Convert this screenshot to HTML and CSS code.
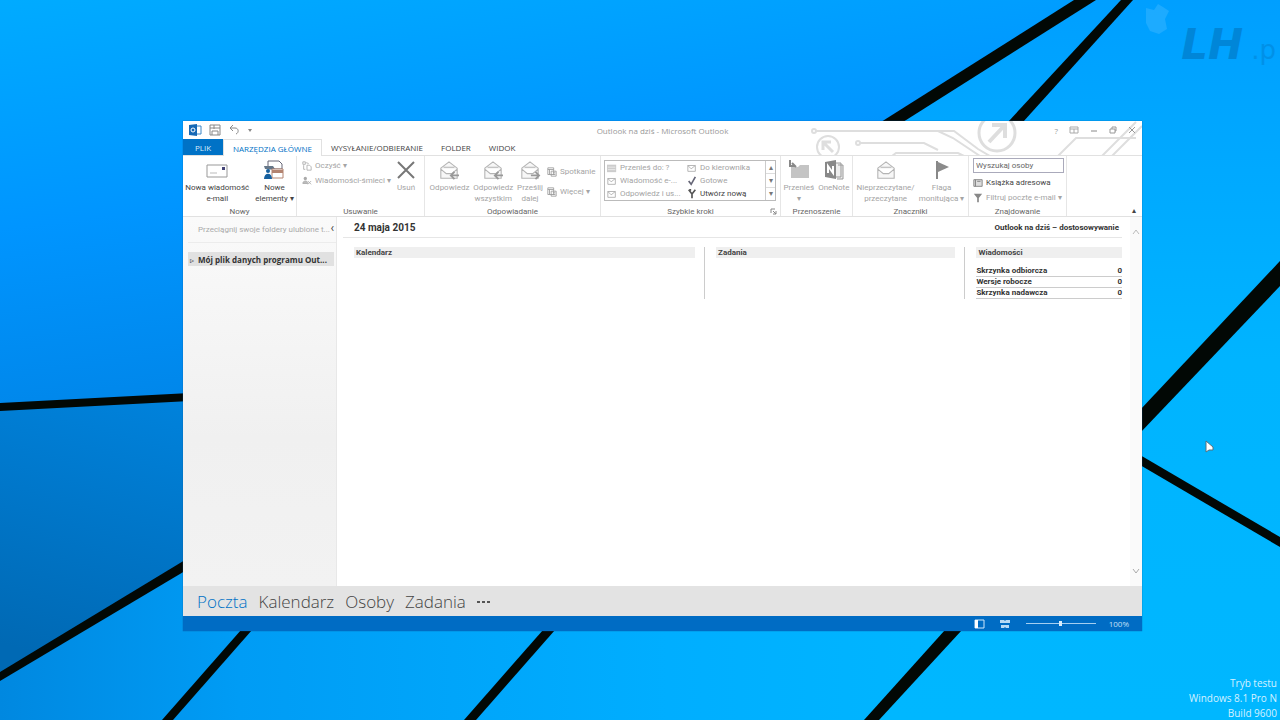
FILE: index.html
```html
<!DOCTYPE html>
<html lang="pl">
<head>
<meta charset="utf-8">
<meta name="viewport" content="width=device-width, initial-scale=1">
<title>Outlook na dziś - Microsoft Outlook</title>
<link rel="stylesheet" href="styles.css">
</head>
<body>
<svg class="defs" aria-hidden="true">
  <symbol id="env" viewBox="0 0 22 22"><path d="M2 9 11 2l9 7v11H2zM2 10l6 5h6l6-5M5 8h12" fill="#f7f7f7" stroke="#b4b4b4" stroke-width="1.2"/></symbol>
  <symbol id="reply" viewBox="0 0 22 22"><use href="#env"/><path d="M22 17h-8M17 13l-4 4 4 4" fill="none" stroke="#999" stroke-width="2"/></symbol>
  <symbol id="forward" viewBox="0 0 22 22"><use href="#env"/><path d="M12 17h8M17 13l4 4-4 4" fill="none" stroke="#999" stroke-width="2"/></symbol>
  <symbol id="cal" viewBox="0 0 12 12"><path d="M1 1h7v8H1zM1 3h7M3 3v6M5 5h6v6H5zM7 7h3M7 9h3" fill="none" stroke="#999"/></symbol>
  <symbol id="mini" viewBox="0 0 12 12"><path d="M1 3h9v7H1zM1 3l4 4 5-4" fill="none" stroke="#aaa"/></symbol>
  <symbol id="clean" viewBox="0 0 12 12"><path d="M1 1h3v3H1zM2 5v5h2M6 5h3l2 2v4H6zM5 2l3 1" fill="none" stroke="#aaa"/></symbol>
  <symbol id="person" viewBox="0 0 12 12"><circle cx="4" cy="3" r="2" fill="#aaa"/><path d="M1 9c0-4 6-4 6 0zM7 10l4-4M7 6l4 4" fill="#bbb" stroke="#aaa"/></symbol>
</svg>
<main class="desktop">
  <svg class="wallpaper" viewBox="0 0 1280 720" preserveAspectRatio="xMidYMid slice" aria-hidden="true">
    <defs>
      <linearGradient id="g1" x1="0" y1="0" x2=".35" y2="1"><stop offset="0" stop-color="#00abff"/><stop offset=".5" stop-color="#0095ff"/><stop offset="1" stop-color="#0084e6"/></linearGradient>
      <linearGradient id="g2" x1=".8" y1="0" x2=".2" y2="1"><stop offset="0" stop-color="#008ae8"/><stop offset="1" stop-color="#0069b4"/></linearGradient>
      <linearGradient id="g3" x1="0" y1="0" x2="1" y2="0"><stop offset="0" stop-color="#0088e0"/><stop offset=".25" stop-color="#009cf5"/><stop offset=".7" stop-color="#00aeff"/><stop offset="1" stop-color="#00b6ff"/></linearGradient>
      <linearGradient id="g4" x1="0" y1="0" x2="0" y2="1"><stop offset="0" stop-color="#009fff"/><stop offset=".5" stop-color="#00b4ff"/><stop offset="1" stop-color="#00b7ff"/></linearGradient>
    </defs>
    <path d="M0 0h1280v720H0z" fill="url(#g4)"/>
    <path d="M0 0h1085L640 275 183 397 0 408z" fill="url(#g1)"/>
    <path d="M0 408 183 397h450L183 565 0 677z" fill="url(#g2)"/>
    <path d="M0 677 183 565h450l320 65-80 90H0z" fill="url(#g3)"/>
    <g fill="#020805">
      <path d="M0 403 190 393v8L0 411z"/><path d="M0 672 190 557v11L0 681z"/>
      <path d="M162 720 241 630h11L173 720z"/><path d="M464 720 543 630h12L476 720z"/>
      <path d="M864 720 945 630h17L879 720z"/>
      <path d="M1074 0h22L903 122h-22z"/><path d="M1121 0h12L1023 122h-15z"/>
      <path d="M1140 410 1280 261v25L1140 433z"/><path d="M1140 455 1280 537v10L1140 465z"/>
    </g>
    <path d="M1146 8l8 2 4-6 5 3 6 4-4 8 2 10-8 5-9-3-4-8z" fill="#39b6ff" opacity=".5"/>
    <path d="M1206 441v11l3-2h4v-3z" fill="#fff" stroke="#57717f"/>
  </svg>
  <p class="brand"><b>LH</b><span>.p</span></p>
  <p class="build">Tryb testu<br>Windows 8.1 Pro N<br>Build 9600</p>

  <section class="window" aria-label="Microsoft Outlook">
    <svg class="circuit" viewBox="0 0 340 35" aria-hidden="true">
      <g fill="none" stroke="#dedede" stroke-width="2">
        <path d="M14 10h122l15 7 27 18M134 10h18l24 18 12 7M58 22h64l14 7M90 35l4-3h62l6 3"/>
        <circle cx="12" cy="10" r="2"/><circle cx="56" cy="22" r="2"/><circle cx="26" cy="26" r="11"/><circle cx="195" cy="12" r="18" stroke-width="3"/>
        <path d="M31 31l-9-9M21 29v-8h8" stroke-width="3"/><path d="M187 21l15-16M190 4h13v13" stroke-width="4"/>
        <path d="M256 35l18-18h60M300 35l34-34M310 35l30-30"/>
      </g>
    </svg>
    <header class="titlebar">
      <div class="quick">
        <svg width="13" height="12" viewBox="0 0 13 12"><path d="M6 2h6v8H6z" fill="#fff" stroke="#3d86c6"/><path d="M0 1l8-1v12l-8-1z" fill="#1769b5"/><circle cx="4" cy="6" r="2" fill="none" stroke="#fff"/></svg>
        <button aria-label="Wyślij/Odbierz"><svg width="12" height="12" viewBox="0 0 12 12"><path d="M1 1h10v10H1zM1 4h10M3 11V7h6v4M5 1v4" fill="none" stroke="#888"/></svg></button>
        <button aria-label="Cofnij"><svg width="12" height="12" viewBox="0 0 12 12"><path d="M5 1 2 4l3 3M2 4h5c4 0 4 5 1 6" fill="none" stroke="#888"/></svg></button>
        <button aria-label="Dostosuj"><svg width="6" height="6" viewBox="0 0 6 6"><path d="M1 2h4L3 5z" fill="#888"/></svg></button>
      </div>
      <h1>Outlook na dziś - Microsoft Outlook</h1>
      <div class="controls">
        <button aria-label="Pomoc">?</button>
        <button aria-label="Opcje wstążki"><svg width="10" height="8" viewBox="0 0 10 8"><path d="M1 1h8v6H1zM1 3h8M5 3v4" fill="none" stroke="#aaa"/></svg></button>
        <button aria-label="Minimalizuj"><svg width="8" height="8" viewBox="0 0 8 8"><path d="M1 5h6" stroke="#888"/></svg></button>
        <button aria-label="Maksymalizuj"><svg width="8" height="8" viewBox="0 0 8 8"><path d="M1 3h5v4H1zM3 3V1h4v4H6" fill="none" stroke="#999"/></svg></button>
        <button aria-label="Zamknij"><svg width="8" height="8" viewBox="0 0 8 8"><path d="M1 1l6 6M7 1 1 7" stroke="#999"/></svg></button>
      </div>
    </header>
    <nav class="tabs">
      <button class="file">PLIK</button><button class="active">NARZĘDZIA GŁÓWNE</button><button>WYSYŁANIE/ODBIERANIE</button><button>FOLDER</button><button>WIDOK</button>
    </nav>
    <div class="ribbon">
      <section class="group">
        <div class="tools new">
          <button class="big"><svg width="22" height="20" viewBox="0 0 22 20"><path d="M1 5h20v12H1z" fill="#fff" stroke="#999"/><path d="M4 13h7" stroke="#bbb"/><path d="M16 7h3v3h-3z" fill="#447"/></svg><span>Nowa wiadomość<br>e-mail</span></button>
          <button class="big"><svg width="22" height="20" viewBox="0 0 22 20"><path d="M5 1h11l3 3v5H5z" fill="#fff" stroke="#667"/><path d="M1 6h9l2 3H2z" fill="#678"/><path d="M9 9h11v9H9z" fill="#fff" stroke="#b38370"/><path d="M9 10h11v3H9z" fill="#b38370"/><circle cx="5" cy="11" r="2" fill="#16609f"/><path d="M1 19c0-7 8-7 8 0z" fill="#16609f"/></svg><span>Nowe<br>elementy ▾</span></button>
        </div><h2>Nowy</h2>
      </section>
      <section class="group">
        <div class="tools del off">
          <div class="stack"><button><svg><use href="#clean"/></svg>Oczyść ▾</button><button><svg><use href="#person"/></svg>Wiadomości-śmieci ▾</button></div>
          <button class="big"><svg width="22" height="20" viewBox="0 0 22 20"><path d="M3 2l16 16M19 2 3 18" stroke="#777" stroke-width="2"/></svg><span>Usuń</span></button>
        </div><h2>Usuwanie</h2>
      </section>
      <section class="group">
        <div class="tools respond off">
          <button class="big"><svg width="22" height="20"><use href="#reply"/></svg><span>Odpowiedz</span></button>
          <button class="big"><svg width="22" height="20"><use href="#reply"/></svg><span>Odpowiedz<br>wszystkim</span></button>
          <button class="big"><svg width="22" height="20"><use href="#forward"/></svg><span>Prześlij<br>dalej</span></button>
          <div class="stack spaced"><button><svg><use href="#cal"/></svg>Spotkanie</button><button><svg><use href="#cal"/></svg>Więcej ▾</button></div>
        </div><h2>Odpowiadanie</h2>
      </section>
      <section class="group">
        <div class="steps off">
          <button><svg viewBox="0 0 12 12"><path d="M0 2h11v9H0z" fill="#ccc"/><path d="M1 5h9M1 8h9" stroke="#eee"/></svg>Przenieś do: ?</button><button><svg><use href="#mini"/></svg>Do kierownika</button>
          <button><svg><use href="#mini"/></svg>Wiadomość e-...</button><button><svg viewBox="0 0 12 12"><path d="M2 6l3 4 5-9" fill="none" stroke="#667" stroke-width="2"/></svg>Gotowe</button>
          <button><svg><use href="#mini"/></svg>Odpowiedz i us...</button><button class="on"><svg viewBox="0 0 12 12"><path d="M2 1l4 5v5M10 1 6 6M3 1h2" fill="none" stroke="#555" stroke-width="2"/></svg>Utwórz nową</button>
          <div class="spin"><button aria-label="W górę">▴</button><button aria-label="W dół">▾</button><button aria-label="Więcej kroków">▾</button></div>
        </div><h2>Szybkie kroki<svg class="launch" viewBox="0 0 7 7"><path d="M1 5V1h4M3 3l3 3M6 3v3H3" fill="none" stroke="#888"/></svg></h2>
      </section>
      <section class="group">
        <div class="tools move off">
          <button class="big"><svg width="22" height="20" viewBox="0 0 22 20"><path d="M3 7h7l2-2h9v13H3z" fill="#c4c4c4"/><path d="M2 0v6h5M4 3l4 4" fill="none" stroke="#888" stroke-width="2"/></svg><span>Przenieś<br>▾</span></button>
          <button class="big"><svg width="22" height="20" viewBox="0 0 22 20"><path d="M12 3h6v14h-6zM15 5h5v14h-6" fill="#eee" stroke="#999"/><path d="M2 2l11-2v19L2 17z" fill="#888"/><path d="M5 13V6l5 7V6" fill="none" stroke="#fff" stroke-width="2"/></svg><span>OneNote</span></button>
        </div><h2>Przenoszenie</h2>
      </section>
      <section class="group">
        <div class="tools marks off">
          <button class="big"><svg width="22" height="20"><use href="#env"/></svg><span>Nieprzeczytane/<br>przeczytane</span></button>
          <button class="big"><svg width="22" height="20" viewBox="0 0 22 20"><path d="M6 1v18" stroke="#888" stroke-width="2"/><path d="M7 2l11 5-11 5z" fill="#8b8b8b"/></svg><span>Flaga<br>monitująca ▾</span></button>
        </div><h2>Znaczniki</h2>
      </section>
      <section class="group">
        <div class="find">
          <input type="text" value="Wyszukaj osoby" aria-label="Wyszukaj osoby">
          <button><svg viewBox="0 0 12 12"><path d="M1 2h10v8H1zM3 2v8M5 4h4" fill="#ddd" stroke="#777"/></svg>Książka adresowa</button>
          <button class="dim"><svg viewBox="0 0 12 12"><path d="M1 1h10L7 6v5H5V6z" fill="#888"/></svg>Filtruj pocztę e-mail ▾</button>
        </div><h2>Znajdowanie</h2>
      </section>
      <div class="collapse"><button aria-label="Zwiń wstążkę">▴</button></div>
    </div>
    <div class="content">
      <aside>
        <div class="fav"><span>Przeciągnij swoje foldery ulubione t...</span><button aria-label="Zwiń okienko">‹</button></div>
        <button class="folder"><span>▹</span>Mój plik danych programu Out...</button>
      </aside>
      <div class="today">
        <div class="date"><h2>24 maja 2015</h2><a href="#dostosuj">Outlook na dziś – dostosowywanie</a></div>
        <div class="columns">
          <section><h3>Kalendarz</h3></section>
          <section><h3>Zadania</h3></section>
          <section><h3>Wiadomości</h3>
            <table><tr><th scope="row">Skrzynka odbiorcza</th><td>0</td></tr><tr><th scope="row">Wersje robocze</th><td>0</td></tr><tr><th scope="row">Skrzynka nadawcza</th><td>0</td></tr></table>
          </section>
        </div>
      </div>
      <div class="scroll"><svg viewBox="0 0 8 6"><path d="M1 5l3-4 3 4" fill="none" stroke="#bbb"/></svg><svg viewBox="0 0 8 6"><path d="M1 1l3 4 3-4" fill="none" stroke="#aaa"/></svg></div>
    </div>
    <nav class="modules"><a class="current" href="#poczta">Poczta</a><a href="#kalendarz">Kalendarz</a><a href="#osoby">Osoby</a><a href="#zadania">Zadania</a>
      <button aria-label="Więcej modułów"><svg width="14" height="4" viewBox="0 0 14 4"><path d="M0 1h3v2H0zM5 1h3v2H5zM10 1h3v2h-3z" fill="#555"/></svg></button></nav>
    <footer>
      <button aria-label="Normalny"><svg width="12" height="10" viewBox="0 0 12 10"><path d="M1 1h9v8H1z" fill="none" stroke="#cfe6fa"/><path d="M1 1h3v8H1z" fill="#fff"/></svg></button>
      <button aria-label="Czytanie"><svg width="12" height="10" viewBox="0 0 12 10"><path d="M1 1h4l1 1 1-1h4v3H1zM2 6h8v3H7L6 8 5 9H2z" fill="#b7daf5"/></svg></button>
      <input type="range" min="0" max="100" value="50" aria-label="Powiększenie"><span>100%</span>
    </footer>
  </section>
</main>
</body>
</html>
```
FILE: styles.css
```css
* { box-sizing: border-box; }
body { margin: 0; font: 8px/11px "Open Sans", "Noto Sans", sans-serif; color: #444; }
h1, h2, h3, p { margin: 0; font-size: inherit; font-weight: 400; }
button { border: 0; padding: 0; background: none; font: inherit; color: inherit; white-space: nowrap; }
a { color: inherit; text-decoration: none; }
svg { display: block; flex: none; }
.defs { position: absolute; width: 0; height: 0; }
.desktop { position: relative; height: 100vh; overflow: hidden; background: #00a8ff; }
.wallpaper { position: absolute; inset: 0; width: 100%; height: 100%; }
.brand { position: absolute; right: 4px; top: 24px; display: flex; align-items: baseline; gap: 8px; font: italic 42px/42px "DejaVu Sans", sans-serif; color: #007dcc; opacity: .75; white-space: nowrap; }
.brand span { font-size: 26px; font-style: normal; opacity: .6; }
.build { position: absolute; right: 3px; bottom: -1px; font-size: 10px; line-height: 15px; text-align: right; color: #d4f1ff; }
.window { position: absolute; inset: 121px 138px 89px 183px; display: flex; flex-direction: column; background: #fff; box-shadow: 0 0 1px #0a5c9b; }
.circuit { position: absolute; top: 0; right: 0; width: 340px; height: 35px; }

.titlebar { position: relative; display: grid; grid-template-columns: 1fr auto 1fr; align-items: center; height: 18px; padding: 0 6px; color: #999; }
.quick, .controls { display: flex; align-items: center; gap: 7px; }
.controls { justify-content: flex-end; gap: 11px; }
.tabs { position: relative; display: flex; height: 17px; border-bottom: 1px solid #e1e1e1; }
.tabs button { padding: 0 9px; }
.tabs .file { width: 40px; background: #0072c6; color: #d8ecfb; }
.tabs .active { height: 17px; border: 1px solid #e1e1e1; border-bottom: 0; background: #fff; color: #0072c6; }

.ribbon { position: relative; display: grid; grid-template-columns: 114fr 128fr 176fr 180fr 72fr 116fr 98fr 75fr; height: 61px; background: #fff; border-bottom: 1px solid #e1e1e1; font-family: Roboto, "Noto Sans", sans-serif; }
.group { display: flex; flex-direction: column; justify-content: space-between; min-width: 0; border-right: 1px solid #e6e6e6; }
.group h2 { position: relative; line-height: 9px; text-align: center; color: #666; }
.launch { position: absolute; right: 3px; top: 1px; width: 7px; height: 7px; }
.tools { display: flex; justify-content: center; padding-top: 4px; gap: 4px; }
.big { display: flex; flex-direction: column; align-items: center; line-height: 11px; text-align: center; }
.big svg { margin-bottom: 2px; }
.off, .dim { color: #a4a4a4; }
.on { color: #444; }
.new { gap: 6px; }
.del { justify-content: space-between; padding: 4px 7px 0 5px; }
.stack { display: flex; flex-direction: column; gap: 4px; }
.stack.spaced { gap: 9px; padding-top: 6px; }
.stack button, .steps > button, .find button { display: flex; align-items: center; gap: 3px; text-align: left; }
.stack svg, .steps > button svg, .find svg { width: 10px; height: 10px; }
.steps { position: relative; display: grid; grid-template-columns: 1fr 1fr 10px; grid-template-rows: repeat(3, 13px); margin: 4px 4px 0 3px; border: 1px solid #bbb; }
.steps > button { overflow: hidden; padding-left: 2px; }
.spin { grid-column: 3; grid-row: 1 / 4; display: grid; border-left: 1px solid #ccc; color: #777; }
.spin button + button { border-top: 1px solid #ddd; }
.find { display: flex; flex-direction: column; align-items: flex-start; gap: 4px; padding: 2px 2px 0 4px; }
.find input { width: 100%; height: 15px; margin: 0; padding: 0 2px; border: 1px solid #aab; font: inherit; color: #666; }
.collapse { display: flex; justify-content: flex-end; align-items: flex-end; padding-right: 6px; }

.content { display: flex; flex: 1; min-height: 0; }
aside { width: 154px; padding-left: 5px; background: linear-gradient(#fafafa, #f0f0f0 60%, #f2f2f2); border-right: 1px solid #e8e8e8; }
.fav { display: flex; justify-content: space-between; height: 26px; padding: 7px 2px 0 10px; border-bottom: 1px solid #ececec; color: #aaa; font-family: Roboto, sans-serif; white-space: nowrap; }
.fav button { height: 8px; line-height: 6px; font-size: 12px; color: #444; }
.folder { display: flex; align-items: center; gap: 4px; width: 146px; height: 14px; margin-top: 9px; padding-left: 2px; background: #e1e1e1; font-weight: 700; text-align: left; color: #333; }
.folder span { font-weight: 400; }
.today { flex: 1; padding: 0 8px 0 6px; }
.date { display: flex; justify-content: space-between; align-items: center; height: 21px; padding: 0 3px 0 11px; border-bottom: 1px solid #e6e6e6; font-family: Roboto, sans-serif; font-weight: 700; color: #333; }
.date h2 { font-size: 10px; font-weight: 700; }
.columns { display: grid; grid-template-columns: 362fr 261fr 158fr; margin-top: 9px; font-family: Roboto, sans-serif; }
.columns section { padding: 0 9px 0 11px; }
.columns section + section { border-left: 1px solid #ccc; }
.columns section:last-child { padding-right: 0; }
.columns h3 { padding-left: 2px; background: #efefef; font-weight: 700; }
table { width: 100%; margin-top: 8px; border-collapse: collapse; }
th, td { height: 10px; padding: 0; line-height: 10px; border-bottom: 1px solid #ccc; font-weight: 700; text-align: left; color: #333; }
td { text-align: right; }
.scroll { display: flex; flex-direction: column; justify-content: space-between; align-items: center; width: 12px; padding: 12px 0; background: #fafafa; }
.scroll svg { width: 8px; height: 6px; }

.modules { display: flex; align-items: center; gap: 11px; height: 30px; padding: 2px 14px 0; background: #e3e3e3; font-size: 17px; line-height: 24px; font-weight: 300; color: #444; }
.modules .current { color: #0072c6; }
footer { display: flex; justify-content: flex-end; align-items: center; gap: 13px; height: 15px; padding-right: 13px; background: #006cc4; color: #c4e0f7; }
footer span { text-align: right; }
footer input { appearance: none; width: 70px; height: 9px; margin: 0 0 0 2px; background: none; }
footer input::-webkit-slider-runnable-track { height: 1px; background: #a5cef0; }
footer input::-webkit-slider-thumb { appearance: none; width: 3px; height: 5px; margin-top: -2px; background: #d8ecfb; }
```
